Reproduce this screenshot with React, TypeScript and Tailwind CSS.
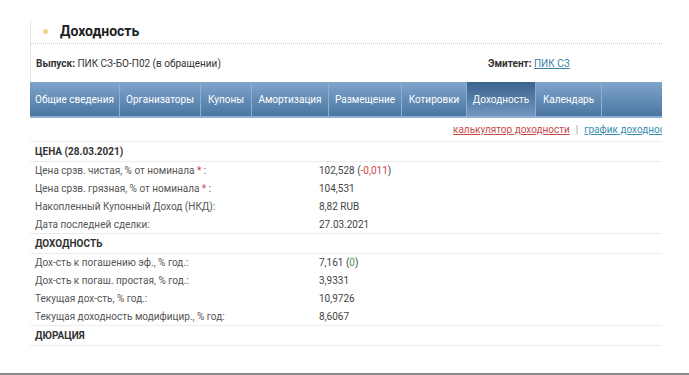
import React from 'react'

const tabs = [
  { label: 'Общие сведения', w: 'w-[90px]' },
  { label: 'Организаторы', w: 'w-[81px]' },
  { label: 'Купоны', w: 'w-[51px]' },
  { label: 'Амортизация', w: 'w-[77px]' },
  { label: 'Размещение', w: 'w-[73px]' },
  { label: 'Котировки', w: 'w-[65px]' },
  { label: 'Доходность', w: 'w-[69px]', active: true },
  { label: 'Календарь', w: 'w-[66px]' },
]

type Row = { label: React.ReactNode; value: React.ReactNode }

const Star = () => <span className="text-[#d0463f]">*</span>

const priceRows: Row[] = [
  {
    label: (
      <>
        Цена срзв. чистая, % от номинала <Star /> :
      </>
    ),
    value: (
      <>
        102,528 (<span className="text-[#d0463f]">-0,011</span>)
      </>
    ),
  },
  {
    label: (
      <>
        Цена срзв. грязная, % от номинала <Star /> :
      </>
    ),
    value: '104,531',
  },
  { label: 'Накопленный Купонный Доход (НКД):', value: '8,82 RUB' },
  { label: 'Дата последней сделки:', value: '27.03.2021' },
]

const yieldRows: Row[] = [
  {
    label: 'Дох-сть к погашению эф., % год.:',
    value: (
      <>
        7,161 (<span className="text-[#4a9a4a]">0</span>)
      </>
    ),
  },
  { label: 'Дох-сть к погаш. простая, % год.:', value: '3,9331' },
  { label: 'Текущая дох-сть, % год.:', value: '10,9726' },
  { label: 'Текущая доходность модифицир., % год:', value: '8,6067' },
]

function Section({ title, rows }: { title: string; rows?: Row[] }) {
  return (
    <div>
      <div className="h-[20px] flex items-center px-[5px] border-b border-[#ececec] text-[10px] font-bold text-[#333]">
        {title}
      </div>
      {rows && (
        <div className="border-b border-[#ececec]">
          {rows.map((r, i) => (
            <div key={i} className="h-[17.75px] flex items-center text-[10px] text-[#555]">
              <div className="w-[289px] pl-[5px]">{r.label}</div>
              <div className="text-[#444]">{r.value}</div>
            </div>
          ))}
        </div>
      )}
    </div>
  )
}

export default function App() {
  return (
    <div className="w-[689px] h-[375px] bg-white relative overflow-hidden font-['Roboto',sans-serif]">
      <div className="pt-[20px] pl-[30px] w-[662px]">
        <div className="border-l border-[#e6e6e6]">
          <div className="h-[24px] flex items-center border-b border-dotted border-[#c8c8c8]">
            <span className="ml-[12px] w-[5px] h-[5px] rounded-full bg-[#f1d48a]" />
            <span className="ml-[12px] text-[14px] font-bold text-[#222]">Доходность</span>
          </div>
          <div className="h-[38px] flex items-center text-[10px] text-[#333]">
            <div className="w-[457px] pl-[5px]">
              <span className="font-bold">Выпуск:</span> ПИК СЗ-БО-П02 (в обращении)
            </div>
            <div>
              <span className="font-bold">Эмитент:</span>{' '}
              <span className="text-[#3b7fa8] underline">ПИК СЗ</span>
            </div>
          </div>
        </div>

        <div className="h-[36px] flex bg-gradient-to-b from-[#7fa5cb] to-[#4b76a2] border-b-2 border-[#8fb0d0]">
          {tabs.map((t) => (
            <div
              key={t.label}
              className={`${t.w} flex items-center justify-center border-r border-[#8db0d2] text-[10px] text-white ${
                t.active ? 'bg-gradient-to-b from-[#3c638d] to-[#7097bf]' : ''
              }`}
            >
              {t.label}
            </div>
          ))}
        </div>

        <div className="h-[24px] flex items-center overflow-hidden whitespace-nowrap text-[10px] border-b border-[#ececec]">
          <span className="ml-[423px] text-[#c94a4a] underline">калькулятор доходности</span>
          <span className="mx-[6px] text-[#999]">|</span>
          <span className="text-[#3b8fb0] underline">график доходности</span>
        </div>

        <Section title="ЦЕНА (28.03.2021)" rows={priceRows} />
        <Section title="ДОХОДНОСТЬ" rows={yieldRows} />
        <Section title="ДЮРАЦИЯ" />
      </div>
      <div className="absolute left-0 right-0 bottom-0 h-[2px] bg-[#8a8a8a]" />
    </div>
  )
}
